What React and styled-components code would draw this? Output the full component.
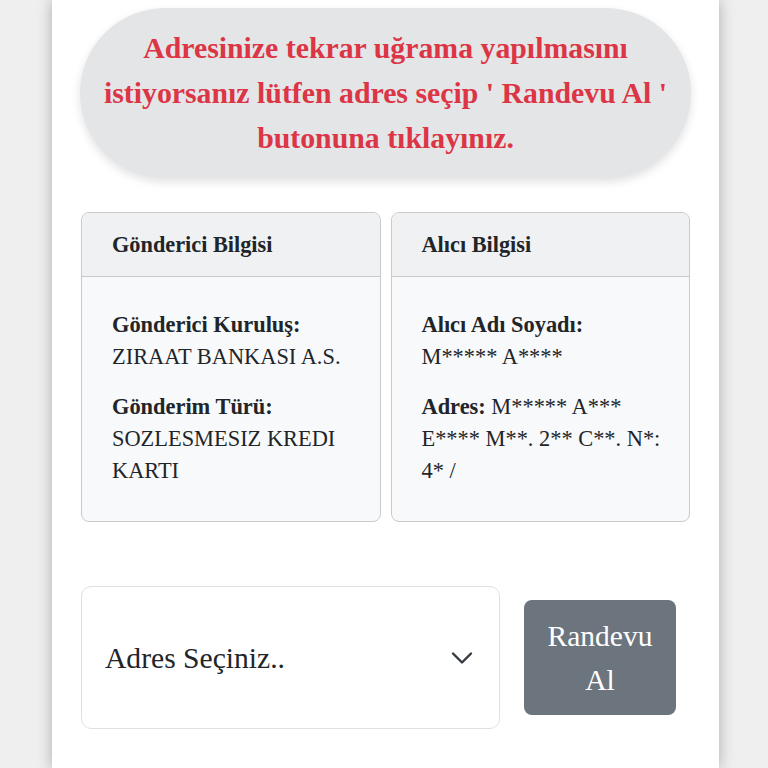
import React from 'react';
import styled, { createGlobalStyle } from 'styled-components';

const GlobalStyle = createGlobalStyle`
    html, body {
        margin: 0;
        padding: 0;
        background: #efefef;
    }
`;

const Page = styled.div`
    margin: 0 49px 0 52px;
    min-height: 100vh;
    background: #fff;
    box-shadow: 0 0 14px rgba(0, 0, 0, 0.28);
    padding: 8px 28px 40px 28px;
    box-sizing: border-box;
    font-family: 'Liberation Serif', 'Times New Roman', serif;
    color: #212529;
`;

const Notice = styled.div`
    background: #e4e5e7;
    border-radius: 86px;
    box-shadow: 0 4px 10px rgba(0, 0, 0, 0.12);
    padding: 17px 16px 18px;
    text-align: center;
    color: #dc3545;
    font-weight: bold;
    font-size: 29.8px;
    line-height: 45px;
`;

const Cards = styled.div`
    display: grid;
    grid-template-columns: 1fr 1fr;
    gap: 10px;
    margin: 34px 1px 0 1px;
`;

const Card = styled.div`
    border: 1.5px solid #c9cacc;
    border-radius: 8px;
    background: #f8f9fa;
    overflow: hidden;
`;

const CardHeader = styled.div`
    background: #f0f1f3;
    border-bottom: 1.5px solid #c9cacc;
    height: 63px;
    display: flex;
    align-items: center;
    padding: 0 24px 0 30px;
    font-weight: bold;
    font-size: 22.3px;
`;

const CardBody = styled.div`
    padding: 32px 22px 34px 30px;
    font-size: 22.4px;
    line-height: 32px;
`;

const Field = styled.p`
    margin: 0 0 18px;

    &:last-child {
        margin-bottom: 0;
    }
`;

const Label = styled.b`
    display: ${(p) => (p.$inline ? 'inline' : 'block')};
`;

const Actions = styled.div`
    display: flex;
    align-items: center;
    gap: 24px;
    margin: 64px 0 0 1px;
`;

const SelectWrap = styled.div`
    position: relative;
    width: 419px;
`;

const Select = styled.select`
    appearance: none;
    width: 100%;
    height: 143px;
    border: 1px solid #dfe1e4;
    border-radius: 10px;
    background: #fff;
    padding: 0 60px 0 23px;
    font-family: 'Liberation Serif', 'Times New Roman', serif;
    font-size: 29.6px;
    color: #212529;
`;

const Chevron = styled.svg`
    position: absolute;
    right: 27px;
    top: 50%;
    transform: translateY(-50%);
    pointer-events: none;
`;

const Button = styled.button`
    width: 152px;
    height: 115px;
    border: none;
    border-radius: 8px;
    background: #6c757d;
    color: #fff;
    font-family: 'Liberation Serif', 'Times New Roman', serif;
    font-size: 29.5px;
    line-height: 44px;
    padding: 0 20px;
`;

const App = () => {
    return (
        <>
            <GlobalStyle />
            <Page>
                <Notice>
                    Adresinize tekrar uğrama yapılmasını istiyorsanız lütfen adres seçip ' Randevu Al ' butonuna tıklayınız.
                </Notice>

                <Cards>
                    <Card>
                        <CardHeader>Gönderici Bilgisi</CardHeader>
                        <CardBody>
                            <Field>
                                <Label>Gönderici Kuruluş:</Label>
                                ZIRAAT BANKASI A.S.
                            </Field>
                            <Field>
                                <Label>Gönderim Türü:</Label>
                                SOZLESMESIZ KREDI KARTI
                            </Field>
                        </CardBody>
                    </Card>
                    <Card>
                        <CardHeader>Alıcı Bilgisi</CardHeader>
                        <CardBody>
                            <Field>
                                <Label>Alıcı Adı Soyadı:</Label>
                                M***** A****
                            </Field>
                            <Field>
                                <Label $inline>Adres:</Label> M***** A*** E**** M**. 2** C**. N*: 4* /
                            </Field>
                        </CardBody>
                    </Card>
                </Cards>

                <Actions>
                    <SelectWrap>
                        <Select defaultValue=''>
                            <option value=''>Adres Seçiniz..</option>
                        </Select>
                        <Chevron width='22' height='13' viewBox='0 0 22 13'>
                            <path d='M2 2l9 9 9-9' fill='none' stroke='#343a40' strokeWidth='2.4' strokeLinecap='round' strokeLinejoin='round' />
                        </Chevron>
                    </SelectWrap>
                    <Button>Randevu Al</Button>
                </Actions>
            </Page>
        </>
    );
};

export default App;
